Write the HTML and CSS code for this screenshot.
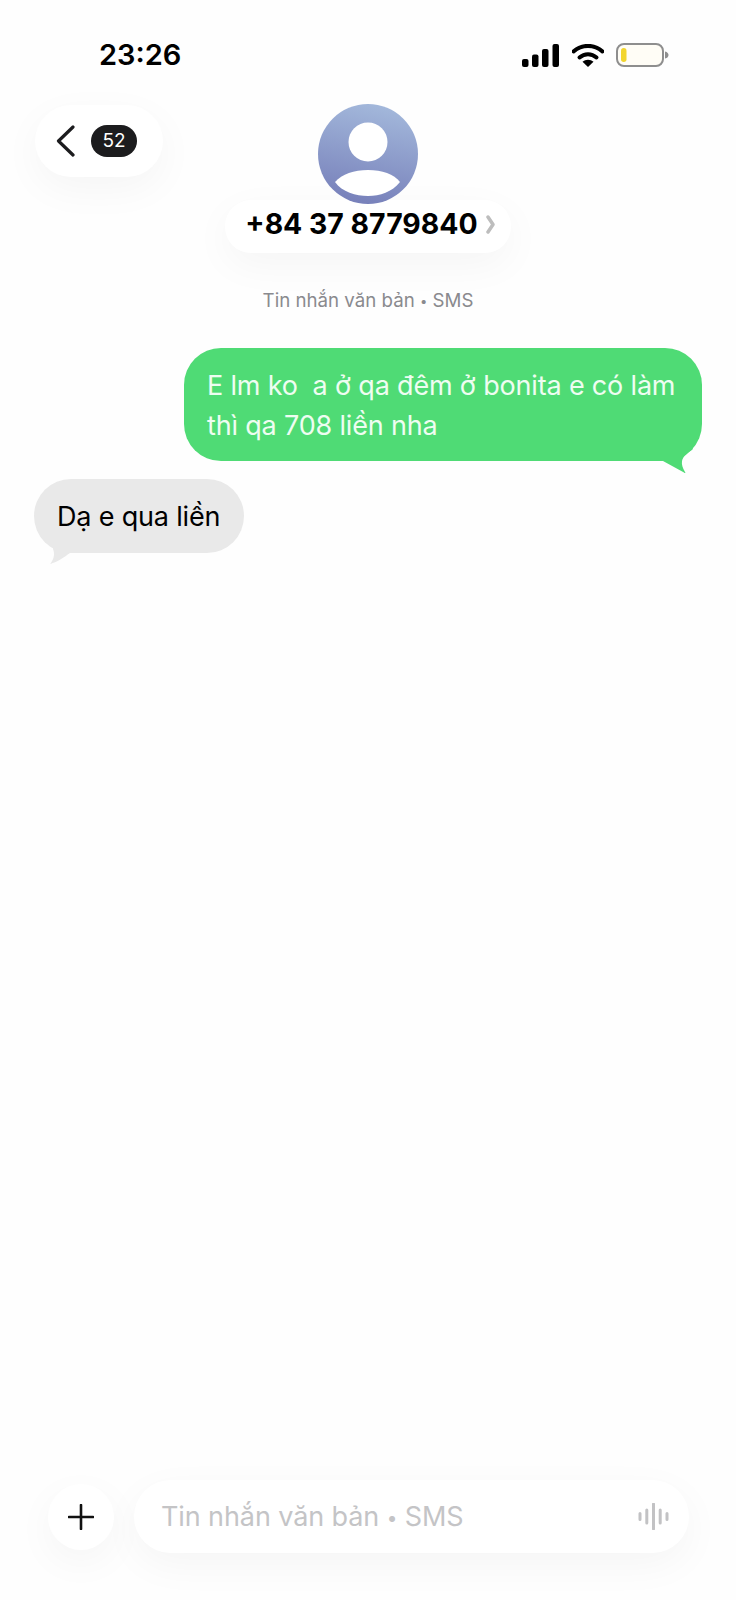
FILE: index.html
```html
<!DOCTYPE html>
<html lang="vi">
<head>
<meta charset="utf-8">
<title>Tin nhắn</title>
<link rel="stylesheet" href="styles.css">
</head>
<body>
<div class="screen">
  <div class="status">
    <span class="time">23:26</span>
    <div class="status-icons">
      <svg class="signal" width="37" height="23" viewBox="0 0 37 23"><rect x="0" y="15" width="6.5" height="8" rx="2"/><rect x="10" y="10.500" width="6.500" height="12.500" rx="2"/><rect x="20" y="5" width="6.500" height="18" rx="2"/><rect x="30.500" y="0" width="6.500" height="23" rx="2"/></svg>
      <svg class="wifi" width="32" height="23" viewBox="0 0 32 23"><path d="M1.500 7.500C9.500 0 22.500 0 30.500 7.500" fill="none" stroke="#000" stroke-width="4" stroke-linecap="round"/><path d="M7.500 13.500C12.500 9 19.500 9 24.500 13.500" fill="none" stroke="#000" stroke-width="4" stroke-linecap="round"/><path d="M16 23l-5.500-5.300c3-2.700 8-2.700 11 0z"/></svg>
      <svg class="battery" width="53" height="24" viewBox="0 0 53 24"><rect x="1" y="1" width="46" height="22" rx="7" fill="#fffdf6" stroke="#8e8e8e" stroke-width="2"/><rect x="5" y="5" width="5.500" height="14" rx="2.700" fill="#f2d52e"/><path d="M49 8.500c2.500.5 3.500 2 3.500 3.500s-1 3-3.500 3.500z" fill="#8e8e8e"/></svg>
    </div>
  </div>

  <header class="head">
    <div class="back">
      <svg width="19" height="32" viewBox="0 0 19 32"><path d="M17 2L2.500 16 17 30" fill="none" stroke="#1c1c1e" stroke-width="3.200" stroke-linecap="round" stroke-linejoin="round"/></svg>
      <span class="badge">52</span>
    </div>
    <div class="contact">
      <svg class="avatar" width="100" height="100" viewBox="0 0 100 100">
        <defs><linearGradient id="ag" x1="0.600" y1="0" x2="0.400" y2="1"><stop offset="0" stop-color="#a3b8db"/><stop offset="1" stop-color="#7780ba"/></linearGradient></defs>
        <circle cx="50" cy="50" r="50" fill="url(#ag)"/>
        <circle cx="50" cy="38" r="19.500" fill="#fff"/>
        <path d="M17 78C24 70 36 66 50 66s26 4 32 12C74 88 62 92 50 92S24 88 17 78z" fill="#fff"/>
      </svg>
      <div class="name-pill">
        <span class="name">+84 37 8779840</span>
        <svg width="9" height="19" viewBox="0 0 9 19"><path d="M2 2l5 7.500L2 17" fill="none" stroke="#bdbdbd" stroke-width="3.500" stroke-linecap="round" stroke-linejoin="round"/></svg>
      </div>
      <p class="kind">Tin nhắn văn bản <span class="dot">•</span> SMS</p>
    </div>
  </header>

  <main class="thread">
    <div class="bubble out">
      E lm ko&nbsp; a ở qa đêm ở bonita e có làm thì qa 708 liền nha
      <svg class="tail tail-out" width="42" height="35" viewBox="0 0 42 35"><path d="M3 20L24 31.500C25 32.500 26 32 25 31 22.500 27 21.500 23.500 22 20 23 15 28 12 33 8L28 0H3z" fill="#4fdb75"/></svg>
    </div>
    <div class="bubble in">
      Dạ e qua liền
      <svg class="tail tail-in" width="40" height="30" viewBox="0 0 40 30"><path d="M13 13C15 18 14 23 10 28 18 26 24 21 30 17H40V0H13z" fill="#e9e9e9"/></svg>
    </div>
  </main>

  <footer class="composer">
    <button class="plus" type="button">
      <svg width="26" height="26" viewBox="0 0 26 26"><path d="M13 1v24M1 13h24" stroke="#111" stroke-width="2.600" stroke-linecap="round"/></svg>
    </button>
    <div class="field">
      <span class="placeholder">Tin nhắn văn bản <span class="dot">•</span> SMS</span>
      <svg width="31" height="27" viewBox="0 0 31 27"><path d="M2 10.500v6M8.800 7v13M15.500 1v25M22.200 7v13M29 10.500v6" stroke="#c2c2c4" stroke-width="3" stroke-linecap="round"/></svg>
    </div>
  </footer>
</div>
</body>
</html>
```

FILE: styles.css
```css
* { box-sizing: border-box; }
html, body { margin: 0; padding: 0; }
body { font-family: Inter, "Liberation Sans", sans-serif; background: #fefefe; color: #000; }
.screen { width: 736px; height: 1600px; display: flex; flex-direction: column; overflow: hidden; background: #fefefe; }

.status { display: flex; justify-content: space-between; align-items: center; height: 24px; margin-top: 43px; padding: 0 67px 0 99px; }
.time { font-size: 29px; font-weight: 600; line-height: 24px; }
.status-icons { display: flex; align-items: center; gap: 12px; }
.signal { fill: #000; margin-right: 1px; }

.head { display: grid; grid-template-columns: 1fr auto 1fr; margin-top: 37px; align-items: start; }
.back { justify-self: start; margin: 1px 0 0 35px; width: 128px; height: 72px; border-radius: 36px; background: #fff; display: flex; align-items: center; gap: 16px; padding-left: 21px; box-shadow: 0 12px 40px rgba(0,0,0,.04); }
.badge { width: 46px; height: 32px; border-radius: 16px; background: #1c1c1e; color: #fff; font-size: 19px; line-height: 32px; text-align: center; }
.contact { display: flex; flex-direction: column; align-items: center; }
.avatar { display: block; position: relative; z-index: 1; }
.name-pill { margin-top: -4px; height: 53px; padding: 0 16px 5px 20px; display: flex; align-items: center; gap: 8px; border-radius: 26px; background: #fff; box-shadow: 0 12px 40px rgba(0,0,0,.04); }
.name { font-size: 28.400px; font-weight: 700; line-height: 34px; white-space: nowrap; }
.kind { margin: 36px 0 0; font-size: 18.700px; line-height: 23px; color: #8a8a8e; white-space: nowrap; }
.dot { font-size: .7em; vertical-align: .1em; }

.thread { flex: 1; display: flex; flex-direction: column; gap: 18px; padding: 35px 34px 0; font-size: 27px; line-height: 40px; letter-spacing: -.18px; }
.bubble { position: relative; border-radius: 37px; }
.out { align-self: flex-end; width: 518px; padding: 18px 20px 15px 23px; background: #4fdb75; color: #eefdf1; }
.in { align-self: flex-start; padding: 18px 24px 16px 23px; background: #e9e9e9; color: #000; }
.tail { position: absolute; }
.tail-out { right: 0; bottom: -15px; }
.tail-in { left: 6px; bottom: -13px; }

.composer { display: flex; align-items: center; gap: 20px; padding: 0 47px 47px 48px; }
.plus { width: 66px; height: 66px; border: 0; padding: 0; border-radius: 50%; background: #fff; display: flex; align-items: center; justify-content: center; box-shadow: 0 12px 40px rgba(0,0,0,.04); }
.field { flex: 1; height: 73px; border-radius: 37px; background: #fff; display: flex; align-items: center; justify-content: space-between; padding: 0 20px 0 27px; box-shadow: 0 12px 40px rgba(0,0,0,.04); }
.placeholder { font-size: 27px; letter-spacing: -.1px; color: #c4c4c6; white-space: nowrap; }
```
